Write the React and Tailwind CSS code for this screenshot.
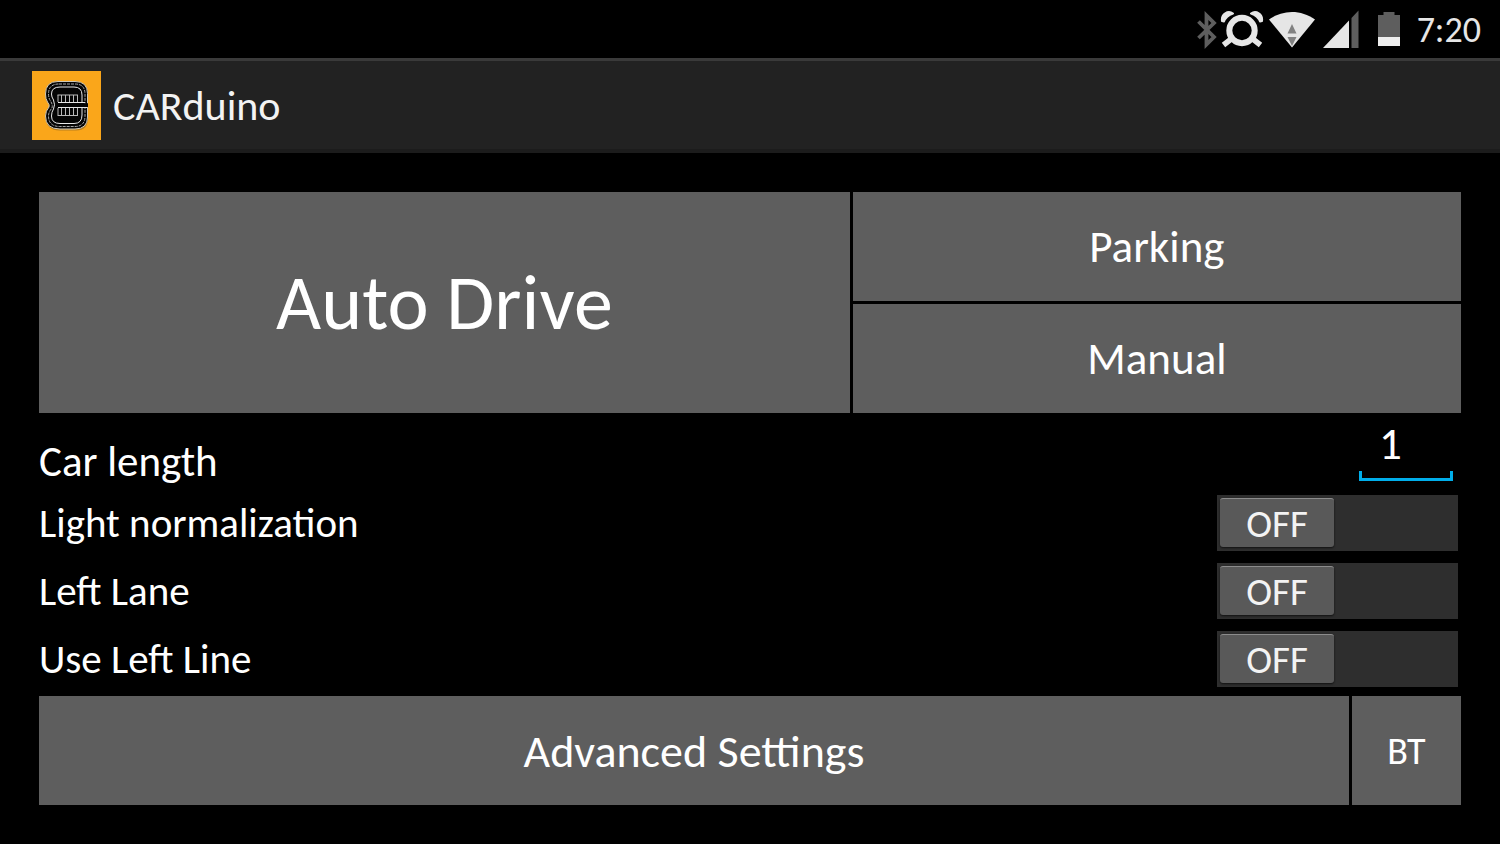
import { useState } from 'react';

const SWITCHES = [
  { id: 'light-normalization', label: 'Light normalization' },
  { id: 'left-lane', label: 'Left Lane' },
  { id: 'use-left-line', label: 'Use Left Line' },
];

function StatusBar() {
  return (
    <div className="flex h-[58px] items-center justify-end bg-black pt-px pr-[19px] text-[#e6e6e6]">
      <svg width="22" height="40" viewBox="0 0 22 40" fill="none" stroke="#5e5e5e" strokeWidth="3.8" aria-label="Bluetooth">
        <path d="M1.500 11.500 17 27 9.500 34.500V5.500L17 13 1.500 28" />
      </svg>
      <svg className="ml-px" width="44" height="40" viewBox="0 0 44 40" aria-label="Alarm">
        <circle cx="22" cy="20.500" r="12.700" fill="none" stroke="#e6e6e6" strokeWidth="6" />
        <path d="M12.500 28 3.500 35M31.500 28 40.500 35" stroke="#e6e6e6" strokeWidth="5.5" />
        <path d="M2 11C1 4 8 0 13 3.500Q6 6 4 11.500ZM42 11C43 4 36 0 31 3.500Q38 6 40 11.500Z" fill="#e6e6e6" stroke="#e6e6e6" strokeWidth="2" strokeLinejoin="round" />
      </svg>
      <svg className="ml-1" width="48" height="40" viewBox="0 0 48 40" aria-label="Wi-Fi">
        <path d="M24 37.500 1 9.500C15 -.5 33 -.5 47 9.500Z" fill="#e6e6e6" />
        <path d="M24 14 28.500 23.500H19.500ZM19.500 27H28.500L24 36Z" fill="#828282" />
      </svg>
      <svg className="ml-[7px]" width="36" height="40" viewBox="0 0 36 40" aria-label="Mobile signal">
        <path d="M0 38 26 10.500V38Z" fill="#e6e6e6" />
        <path d="M28.500 8 35.500 .5V38H28.500Z" fill="#5e5e5e" />
      </svg>
      <svg className="ml-[18px]" width="24" height="40" viewBox="0 0 24 40" aria-label="Battery">
        <path d="M1 5H6.500V2H17.500V5H23V27H1Z" fill="#5e5e5e" />
        <path d="M1 27H23V36H1Z" fill="#eeeeee" />
      </svg>
      <time className="ml-4 text-[36px] leading-[56px]">7:20</time>
    </div>
  );
}

function Logo() {
  return (
    <svg className="shrink-0" width="69" height="69" viewBox="0 0 69 69" aria-hidden="true">
      <path d="M0 0H69V69H0Z" fill="#faa61a" />
      <path d="M26 12H44Q56 12 56 23V47Q56 59.500 44 59.500H28Q14 59.500 14 46Q13 40 17 36Q18 34 15 31Q13 28 14 24Q14 12 26 12Z" fill="#7d5a20" opacity=".5" />
      <path d="M26 10.500H43Q55.500 10.500 55.500 22.500V46Q55.500 58 43 58H28Q13.500 58 13.500 45Q13.500 40 17 36Q18 34 15.500 31Q13.500 28 13.500 23Q13.500 10.500 26 10.500Z" fill="#050505" stroke="#cfc8b8" />
      <path d="M27 13H43Q53 13 53 23V45Q53 55.500 43 55.500H28Q16.500 55.500 16.500 45Q16.500 41 20 37Q21 34 18.500 30Q16.500 27 16.500 23Q16.500 13 27 13Z" fill="none" stroke="#a5a5a5" strokeDasharray="3 1" />
      <path d="M53 31.500H26M50 31.500V24Q50 16 42 16H28Q19.500 16 19.500 23Q19.500 26 21.500 29Q23.500 34 21.500 38Q19.500 41 19.500 45Q19.500 52.500 28 52.500H42Q50 52.500 50 44V36.500H26M50 36.500H55" fill="none" stroke="#e8e8e8" />
      <path d="M50 32.200H56V36H50Z" fill="#050505" />
      <path d="M25.500 24H46M26 24V31M29.500 24V31M33.500 24V31M37.500 24V31M41.500 24V31M45.500 24V31M25.500 44.500H46M26 37V44M29.500 37V44M33.500 37V44M37.500 37V44M41.500 37V44M45.500 37V44" fill="none" stroke="#b8b8b8" />
    </svg>
  );
}

function SwitchRow({ id, label }) {
  const [on, setOn] = useState(false);

  return (
    <label htmlFor={id} className="flex h-[68px] cursor-pointer items-center justify-between pr-[3px]">
      <span className="text-[41px] leading-[48px]">{label}</span>
      <input id={id} type="checkbox" role="switch" className="sr-only" checked={on} onChange={(e) => setOn(e.target.checked)} />
      <span className={`flex h-14 w-[241px] items-start bg-[#2e2e2e] p-[3px] ${on ? 'justify-end' : 'justify-start'}`}>
        <span className="flex h-[49px] w-[114px] items-center justify-center rounded-[3px] border-t border-[#8c8c8c] bg-[#595959] pt-px text-[39px] leading-[47px] text-[#f3f3f3] shadow-[0_1px_2px_#111111]">
          {on ? 'ON' : 'OFF'}
        </span>
      </span>
    </label>
  );
}

export default function App() {
  const [carLength, setCarLength] = useState('1');

  return (
    <div className="min-h-screen bg-black font-[Carlito,Lato,sans-serif] text-white">
      <StatusBar />
      <header className="flex h-[95px] items-center gap-3 border-t-3 border-b-4 border-t-[#3a3a3a] border-b-[#1c1c1c] bg-[#222222] px-8">
        <Logo />
        <h1 className="pt-px text-[42px] leading-[48px] text-[#f3f3f3]">CARduino</h1>
      </header>

      <main className="px-[39px] pt-[39px] pb-[39px]">
        <div className="grid grid-cols-[4fr_3fr] grid-rows-[109px_109px] gap-[3px]">
          <button className="row-span-2 bg-[#5e5e5e] pt-px text-[78px] leading-[96px]">Auto Drive</button>
          <button className="bg-[#5e5e5e] pt-px text-[45px] leading-[48px]">Parking</button>
          <button className="bg-[#5e5e5e] pt-px text-[45px] leading-[48px]">Manual</button>
        </div>

        <div className="flex h-[76px] items-end justify-between pr-2 pb-[3px]">
          <label htmlFor="car-length" className="text-[43px] leading-[48px]">Car length</label>
          <div className="flex w-[94px] flex-col pb-[5px]">
            <input
              id="car-length"
              inputMode="numeric"
              className="mb-[3px] h-12 w-full bg-transparent pl-5 text-[45px] leading-[48px] outline-none"
              value={carLength}
              onChange={(e) => setCarLength(e.target.value)}
            />
            <div className="h-[10px] border-x-3 border-b-3 border-[#00aeea]" />
          </div>
        </div>

        {SWITCHES.map((item) => (
          <SwitchRow key={item.id} id={item.id} label={item.label} />
        ))}

        <div className="mt-[3px] grid grid-cols-[1fr_109px] grid-rows-[109px] gap-[3px]">
          <button className="bg-[#5e5e5e] pt-px text-[46px] leading-[48px]">Advanced Settings</button>
          <button className="bg-[#5e5e5e] text-[38px] leading-[48px]">BT</button>
        </div>
      </main>
    </div>
  );
}
